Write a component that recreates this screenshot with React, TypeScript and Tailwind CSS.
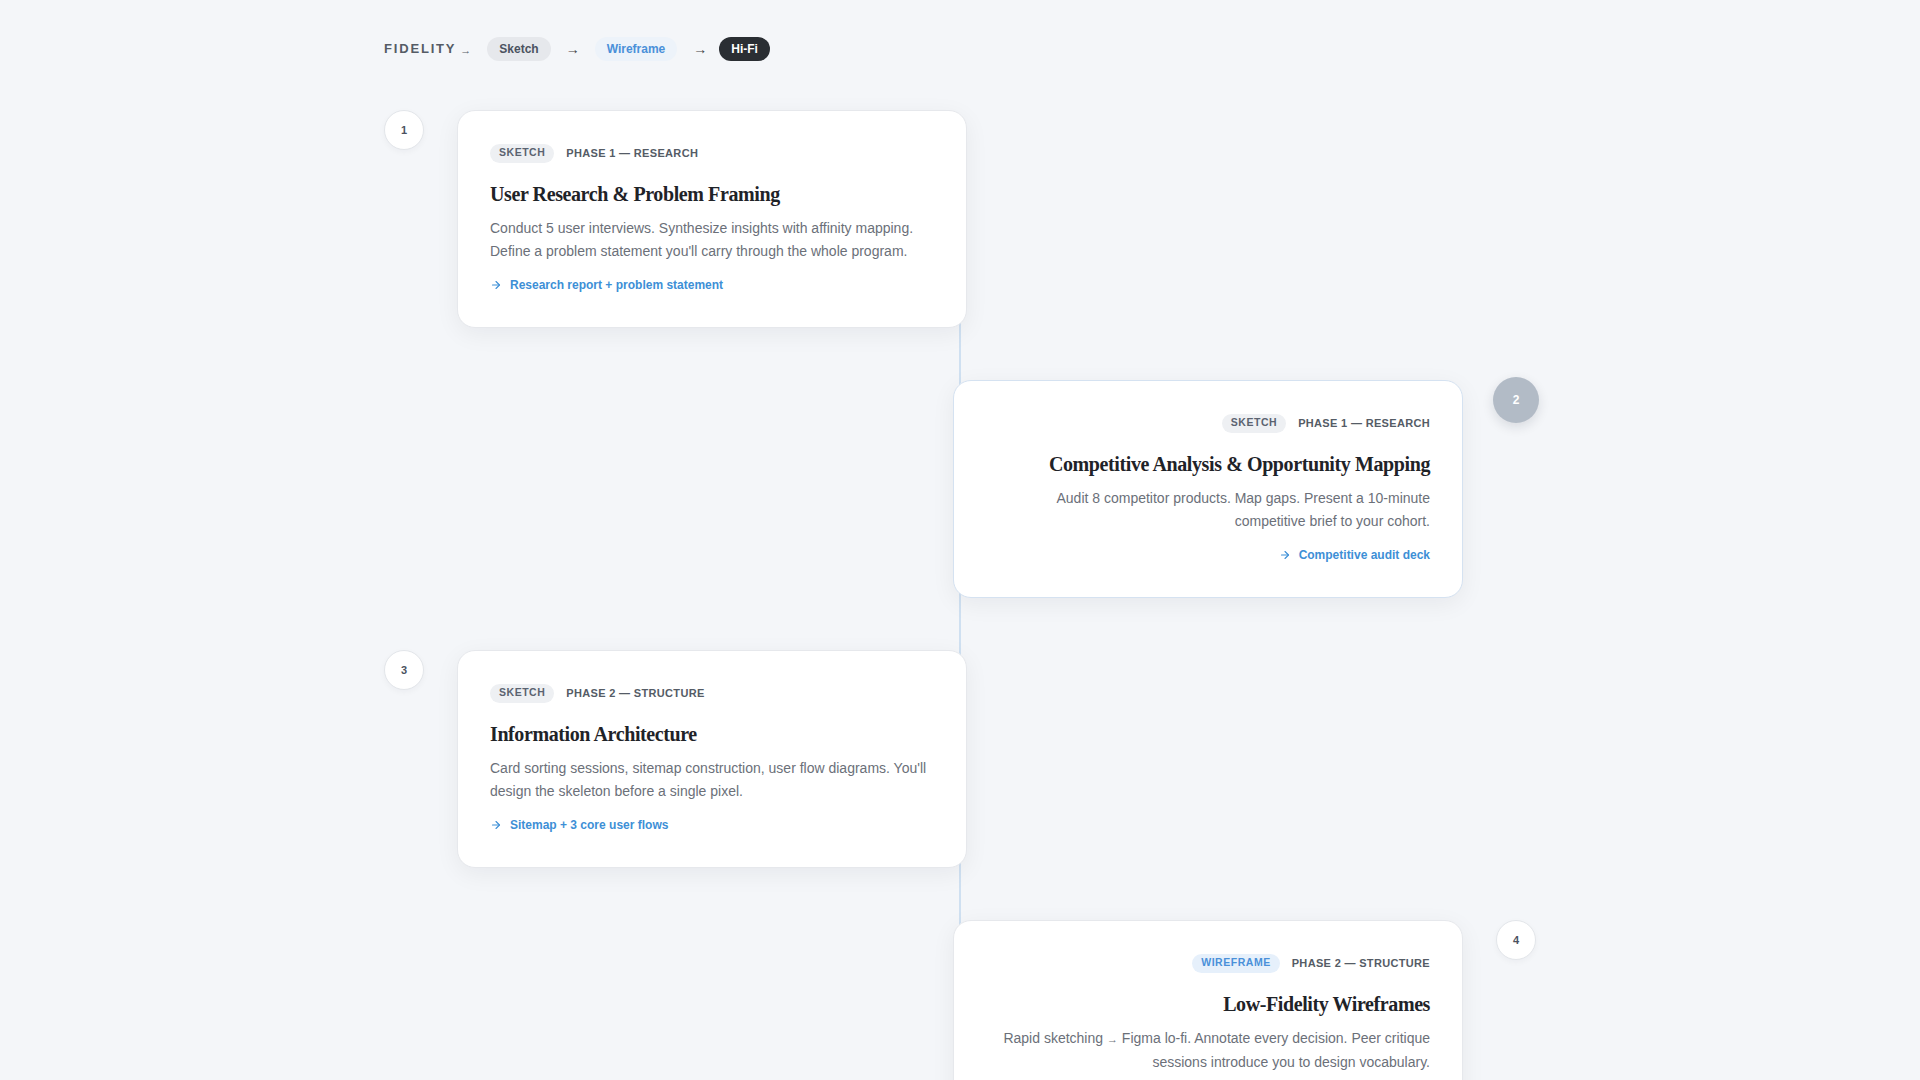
import React from "react";

const sans = { fontFamily: '"Liberation Sans", Arial, sans-serif' };
const serif = { fontFamily: '"Liberation Serif", "Times New Roman", serif' };

type Item = {
  n: number;
  tag: string;
  wire?: boolean;
  phase: string;
  title: string;
  desc: React.ReactNode;
  link: string;
  side: "left" | "right";
  active?: boolean;
};

const items: Item[] = [
  {
    n: 1, tag: "SKETCH", phase: "PHASE 1 — RESEARCH", title: "User Research & Problem Framing",
    desc: <>Conduct 5 user interviews. Synthesize insights with affinity mapping.<br />Define a problem statement you'll carry through the whole program.</>,
    link: "Research report + problem statement", side: "left",
  },
  {
    n: 2, tag: "SKETCH", phase: "PHASE 1 — RESEARCH", title: "Competitive Analysis & Opportunity Mapping",
    desc: <>Audit 8 competitor products. Map gaps. Present a 10-minute<br />competitive brief to your cohort.</>,
    link: "Competitive audit deck", side: "right", active: true,
  },
  {
    n: 3, tag: "SKETCH", phase: "PHASE 2 — STRUCTURE", title: "Information Architecture",
    desc: <>Card sorting sessions, sitemap construction, user flow diagrams. You'll<br />design the skeleton before a single pixel.</>,
    link: "Sitemap + 3 core user flows", side: "left",
  },
  {
    n: 4, tag: "WIREFRAME", wire: true, phase: "PHASE 2 — STRUCTURE", title: "Low-Fidelity Wireframes",
    desc: <>Rapid sketching <span className="text-[11px]">→</span> Figma lo-fi. Annotate every decision. Peer critique<br />sessions introduce you to design vocabulary.</>,
    link: "Wireframe set", side: "right",
  },
];

function Arrow() {
  return (
    <svg width="12" height="12" viewBox="0 0 24 24" fill="none" stroke="currentColor" strokeWidth="2.2" strokeLinecap="round" strokeLinejoin="round">
      <path d="M5 12h14" />
      <path d="M12 5l7 7-7 7" />
    </svg>
  );
}

function Card({ it }: { it: Item }) {
  const right = it.side === "right";
  return (
    <div
      className={`w-[510px] h-[218px] shrink-0 bg-white rounded-[18px] border px-[32px] pt-[32px] shadow-[0_6px_24px_rgba(15,23,42,0.06)] flex flex-col ${
        it.active ? "border-[#d5e2f1]" : "border-[#e6e8ec]"
      } ${right ? "items-end text-right" : "items-start text-left"}`}
    >
      <div className="flex items-center gap-[12px] h-[20px]">
        <span
          className={`rounded-full px-[9px] h-[19px] flex items-center text-[10.5px] font-bold tracking-[0.05em] ${
            it.wire ? "bg-[#e6f0fb] text-[#4a90d9]" : "bg-[#eef0f3] text-[#5b6370]"
          }`}
        >
          {it.tag}
        </span>
        <span className="text-[11px] font-bold tracking-[0.03em] text-[#555c66]">{it.phase}</span>
      </div>
      <h3 style={serif} className="mt-[17px] text-[20px] leading-[28px] font-bold tracking-[-0.02em] text-[#1f2328] whitespace-nowrap">
        {it.title}
      </h3>
      <p className="mt-[9px] text-[14px] leading-[23px] text-[#6b7079] whitespace-nowrap">{it.desc}</p>
      <div className="mt-[13px] flex items-center gap-[8px] text-[12px] font-bold text-[#3d8fd6]">
        <Arrow />
        <span>{it.link}</span>
      </div>
    </div>
  );
}

function Circle({ it }: { it: Item }) {
  return (
    <div className="w-[40px] h-[40px] shrink-0 flex items-center justify-center">
      {it.active ? (
        <div className="w-[46px] h-[46px] shrink-0 rounded-full bg-[#b2bbc6] text-white text-[12px] font-bold flex items-center justify-center shadow-[0_4px_12px_rgba(15,23,42,0.12)]">
          {it.n}
        </div>
      ) : (
        <div className="w-[40px] h-[40px] shrink-0 rounded-full bg-white border border-[#e3e6ea] text-[#4b5260] text-[11px] font-bold flex items-center justify-center shadow-[0_2px_6px_rgba(15,23,42,0.04)]">
          {it.n}
        </div>
      )}
    </div>
  );
}

export default function App() {
  return (
    <div style={sans} className="w-full h-[1080px] overflow-hidden bg-[#f4f6f9]">
      <div className="w-[1152px] mx-auto pt-[37px]">
        <div className="flex items-center h-[24px] text-[#555c66]">
          <span className="text-[13px] font-bold tracking-[0.14em]">FIDELITY</span>
          <span className="ml-[4px] text-[11px] mt-[3px]">→</span>
          <span className="ml-[16px] h-[24px] px-[12px] rounded-full bg-[#e6e8ec] text-[12px] font-bold text-[#4b5260] flex items-center">Sketch</span>
          <span className="ml-[15px] text-[14px] text-[#444]">→</span>
          <span className="ml-[15px] h-[24px] px-[12px] rounded-full bg-[#edf3fa] text-[12px] font-bold text-[#4a90d9] flex items-center">Wireframe</span>
          <span className="ml-[16px] text-[14px] text-[#444]">→</span>
          <span className="ml-[12px] h-[24px] px-[12px] rounded-full bg-[#2a2e33] text-[12px] font-bold text-white flex items-center">Hi-Fi</span>
        </div>

        <div className="relative mt-[49px] flex flex-col gap-[52px]">
          <div className="absolute left-[575px] top-[20px] bottom-0 w-[2px] bg-[#cfe0f1]" />
          {items.map((it) =>
            it.side === "left" ? (
              <div key={it.n} className="relative flex items-start gap-[33px]">
                <Circle it={it} />
                <Card it={it} />
              </div>
            ) : (
              <div key={it.n} className="relative flex items-start justify-end gap-[33px]">
                <Card it={it} />
                <Circle it={it} />
              </div>
            )
          )}
        </div>
      </div>
    </div>
  );
}
